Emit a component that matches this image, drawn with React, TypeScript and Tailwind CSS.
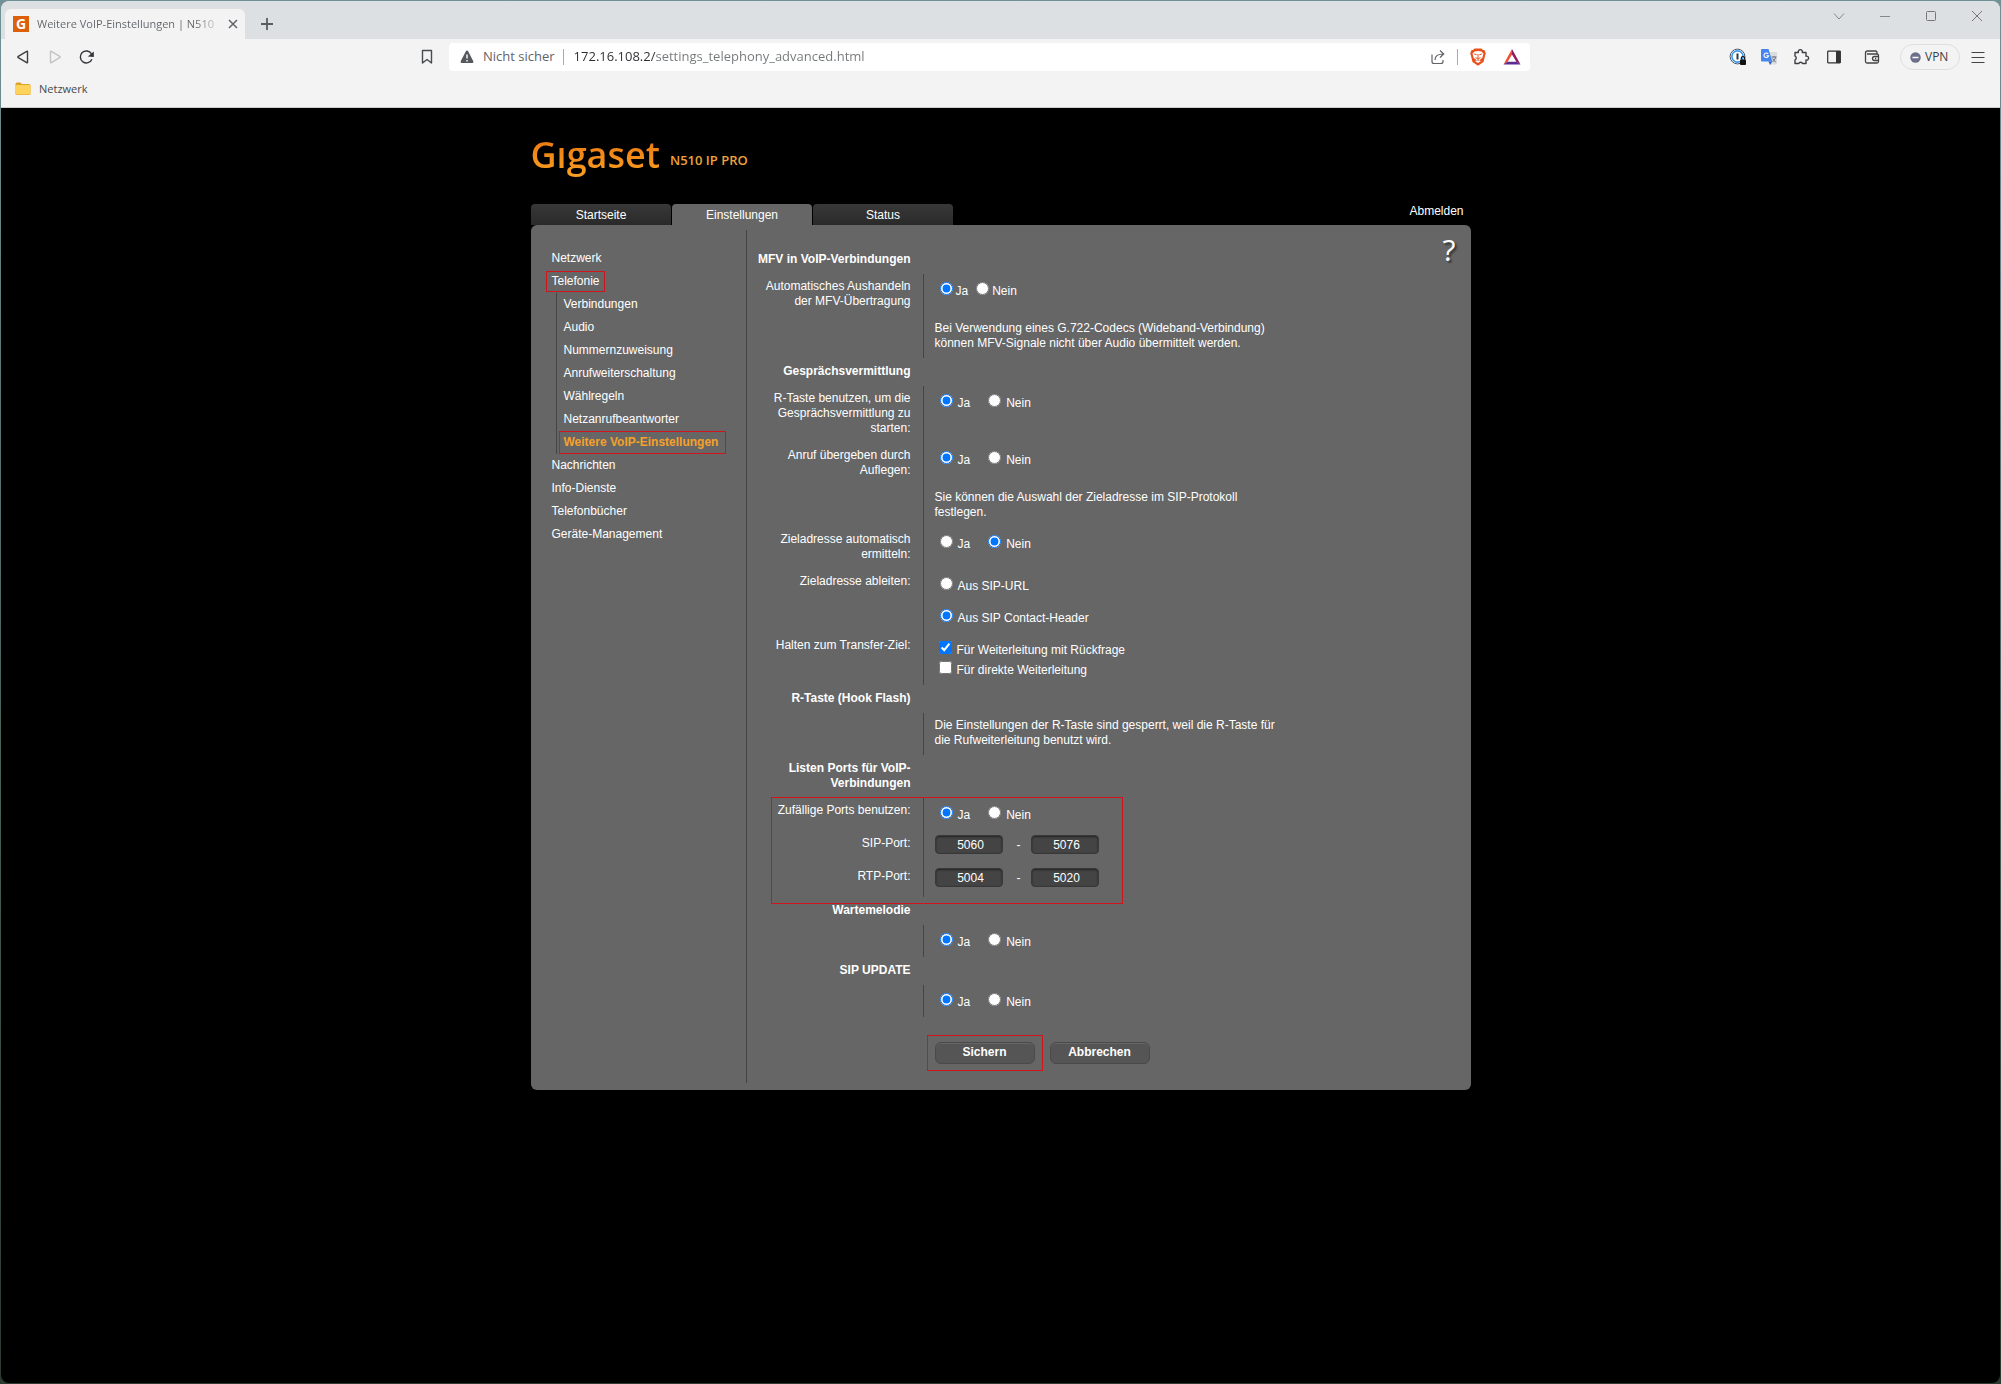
import type { ReactNode } from 'react';

const NAV_BEFORE = ['Netzwerk', 'Telefonie'];
const NAV_TELEPHONY = [
  'Verbindungen',
  'Audio',
  'Nummernzuweisung',
  'Anrufweiterschaltung',
  'Wählregeln',
  'Netzanrufbeantworter',
  'Weitere VoIP-Einstellungen',
];
const NAV_AFTER = [
  'Nachrichten',
  'Info-Dienste',
  'Telefonbücher',
  'Geräte-Management',
];

const TABS = ['Startseite', 'Einstellungen', 'Status'];

type FieldRowProps = {
  children: ReactNode;
  className?: string;
  label?: string;
};

function FieldRow({ children, className = '', label }: FieldRowProps) {
  return (
    <div className={`flex ${className}`}>
      <div className="mr-3 w-40 shrink-0 pt-[5px] pb-[7px] text-right">
        {label}
      </div>
      <div className="flex-1 border-l border-[#444] pl-[11px]">{children}</div>
    </div>
  );
}

function SectionTitle({ children }: { children: ReactNode }) {
  return (
    <h2 className="w-40 pt-[6px] pb-[7px] text-right font-bold">{children}</h2>
  );
}

function Note({ children }: { children: ReactNode }) {
  return <p className="max-w-[350px] pt-[5px] pb-[7px]">{children}</p>;
}

type RadioOptionProps = {
  checked?: boolean;
  label: string;
  name: string;
  tight?: boolean;
};

function RadioOption({ checked, label, name, tight }: RadioOptionProps) {
  return (
    <label
      className={`flex h-8 items-center ${tight ? 'gap-[3px]' : 'gap-[5px]'}`}
    >
      <input
        className="mb-1 size-[13px]"
        defaultChecked={checked}
        name={name}
        type="radio"
      />
      <span className="pt-[2px]">{label}</span>
    </label>
  );
}

type YesNoProps = {
  name: string;
  no?: boolean;
  tight?: boolean;
};

function YesNo({ name, no = false, tight = false }: YesNoProps) {
  return (
    <div className={`flex pl-[5px] ${tight ? 'gap-2' : 'gap-[18px]'}`}>
      <RadioOption checked={!no} label="Ja" name={name} tight={tight} />
      <RadioOption checked={no} label="Nein" name={name} tight={tight} />
    </div>
  );
}

type CheckOptionProps = {
  checked?: boolean;
  label: string;
};

function CheckOption({ checked, label }: CheckOptionProps) {
  return (
    <label className="flex h-5 items-center gap-[5px] pl-1">
      <input
        className="mb-1 size-[13px]"
        defaultChecked={checked}
        type="checkbox"
      />
      <span className="pt-[2px]">{label}</span>
    </label>
  );
}

function PortInput({ label, value }: { label: string; value: string }) {
  return (
    <input
      aria-label={label}
      className="h-[19px] w-[68px] rounded border border-[#383838] bg-[#444] pl-1 text-center shadow-[inset_0_1px_2px_#222]"
      defaultValue={value}
      type="text"
    />
  );
}

type PortRangeProps = {
  from: string;
  name: string;
  to: string;
};

function PortRange({ from, name, to }: PortRangeProps) {
  return (
    <div className="flex pt-1 pb-[10px]">
      <PortInput label={`${name} von`} value={from} />
      <span className="w-7 pt-[3px] pl-1 text-center">-</span>
      <PortInput label={`${name} bis`} value={to} />
    </div>
  );
}

function FormButton({ children }: { children: ReactNode }) {
  return (
    <button
      className="h-[22px] w-[100px] rounded-md border border-[#4a4a4a] bg-[#555] pb-px font-bold shadow-[inset_0_1px_0_#666]"
      type="button"
    >
      {children}
    </button>
  );
}

function NavLink({ label }: { label: string }) {
  const isActive = label === 'Weitere VoIP-Einstellungen';
  const isMarked = isActive || label === 'Telefonie';

  return (
    <li className="flex h-[23px] items-center">
      <a
        className={`relative ${isActive ? 'font-bold text-[#f5a12b]' : ''}`}
        href="#"
      >
        {label}
        {isMarked && (
          <span
            className={`absolute border border-[#d0161c] ${
              isActive
                ? '-top-1 -right-2 -bottom-1 -left-[5px]'
                : '-top-[3px] -right-[5px] -bottom-[3px] -left-[6px]'
            }`}
          />
        )}
      </a>
    </li>
  );
}

function TabStrip() {
  return (
    <div className="flex h-[38px] items-end rounded-t-lg bg-[#dce0e3] pl-1">
      <div className="flex h-[30px] w-60 items-center rounded-t-md bg-[#f3f3f3] pr-[3px] pl-2">
        <span className="flex size-4 items-center justify-center bg-[#dc5f0a] font-['Open_Sans'] text-sm font-bold text-white">
          G
        </span>
        <span className="ml-2 w-[186px] bg-linear-to-r from-[#5f6368] from-85% to-transparent bg-clip-text text-[11px] font-medium whitespace-nowrap text-transparent">
          Weitere VoIP-Einstellungen | N510
        </span>
        <button aria-label="Tab schließen" className="ml-auto" type="button">
          <svg className="size-[18px]" viewBox="0 0 18 18" fill="none" stroke="#5f6368" strokeWidth="1.5">
            <path d="M5 5l8 8M13 5l-8 8" />
          </svg>
        </button>
      </div>
      <button aria-label="Neuer Tab" className="mb-[6px] ml-[13px]" type="button">
        <svg className="size-[18px]" viewBox="0 0 18 18" fill="none" stroke="#5a5d60" strokeWidth="1.8">
          <path d="M9 3v12M3 9h12" />
        </svg>
      </button>
      <div className="mb-[15px] ml-auto flex gap-[30px] pr-[15px]">
        <button aria-label="Tabs suchen" type="button">
          <svg className="size-4" viewBox="0 0 16 16" fill="none" stroke="#888" strokeWidth="1">
            <path d="M3 5.500l5 5.500 5-5.500" />
          </svg>
        </button>
        <button aria-label="Minimieren" type="button">
          <svg className="size-4" viewBox="0 0 16 16" fill="none" stroke="#888" strokeWidth="1">
            <path d="M3 8.500h10" />
          </svg>
        </button>
        <button aria-label="Maximieren" type="button">
          <svg className="size-4" viewBox="0 0 16 16" fill="none" stroke="#777" strokeWidth="1">
            <rect x="3.500" y="3.500" width="9" height="9" rx="1" />
          </svg>
        </button>
        <button aria-label="Schließen" type="button">
          <svg className="size-4" viewBox="0 0 16 16" fill="none" stroke="#777" strokeWidth="1">
            <path d="M3 3l10 10M13 3L3 13" />
          </svg>
        </button>
      </div>
    </div>
  );
}

function NavigationIcons() {
  return (
    <div className="flex w-[435px] items-center">
      <button aria-label="Zurück" className="ml-[13px]" type="button">
        <svg className="size-[18px]" viewBox="0 0 18 18" fill="none" stroke="#3d3f42" strokeWidth="1.400" strokeLinejoin="round">
          <path d="M13.500 3.700v10.600q0 .9-.8.400L4.300 9.700q-.9-.7 0-1.400l8.400-5q.8-.4.8.400z" />
        </svg>
      </button>
      <button aria-label="Vorwärts" className="ml-[14px]" type="button">
        <svg className="size-[18px]" viewBox="0 0 18 18" fill="none" stroke="#c4c4c4" strokeWidth="1.400" strokeLinejoin="round">
          <path d="M4.500 3.700v10.600q0 .9.800.4l8.400-5q.9-.7 0-1.400l-8.400-5q-.8-.4-.8.400z" />
        </svg>
      </button>
      <button aria-label="Neu laden" className="ml-[14px]" type="button">
        <svg className="size-[18px]" viewBox="0 0 18 18" fill="none" stroke="#333538" strokeWidth="1.400">
          <path d="M13.900 11.200A6 6 0 1 1 13.500 5.900" />
          <path d="M11.500 8l3.600-3v3.300z" fill="#333538" />
        </svg>
      </button>
      <button aria-label="Lesezeichen" className="ml-auto" type="button">
        <svg className="size-[18px]" viewBox="0 0 18 18" fill="none" stroke="#4a4d50" strokeWidth="1.400" strokeLinejoin="round">
          <path d="M4.500 2.500h9v12.500L9 11.500l-4.500 3.500z" />
        </svg>
      </button>
    </div>
  );
}

function AddressBar() {
  return (
    <div className="flex h-7 w-[1081px] items-center rounded bg-white pr-[9px] text-[13px] text-[#5f6368]">
      <svg className="ml-[10px] size-4" viewBox="0 0 16 16">
        <path d="M8 1.500q.7 0 1 .6l5.300 10.200q.6 1.500-.9 1.700H2.600q-1.500-.2-.9-1.700L7 2.100q.3-.6 1-.6z" fill="#55585c" />
        <path d="M8 5.500v4M8 11v1.500" stroke="#fff" strokeWidth="1.400" />
      </svg>
      <span className="ml-2">Nicht sicher</span>
      <span className="mr-[10px] ml-2 h-4 w-px bg-[#aaa]" />
      {/* host part is darker than the path */}
      <input
        aria-label="Adresse"
        className="w-[420px] bg-linear-to-r from-[#2b2d30] from-[82px] to-[#747779] to-[82px] bg-clip-text text-transparent"
        defaultValue="172.16.108.2/settings_telephony_advanced.html"
        type="text"
      />
      <div className="ml-auto flex items-center">
        <svg className="size-[18px]" viewBox="0 0 18 18" fill="none" stroke="#5f6368" strokeWidth="1.200">
          <path d="M3 6.500V13.500q0 2 2 2h7q2 0 2-2V12" />
          <path d="M6 12q0-6 8.500-6M11 2.500l3.700 3.500-3.700 3.500" />
        </svg>
        <span className="ml-[10px] h-4 w-px bg-[#aaa]" />
        <svg className="ml-[11px] size-[18px]" viewBox="0 0 18 18">
          <path d="M5.500.5h7l1.500 1.600h1.400L16.800 5.200l-.6 2-1.700 6.800L9 17.800 3.500 14 1.800 7.200 1.200 5.200l1.400-3.100H4z" fill="#e8501c" />
          <path d="M5.500 3.600L9 3l3.500.6 2 2.200-1.300 4.200-2.500 1.700 1 1.500L9 15l-2.700-1.800 1-1.500L4.800 10 3.500 5.800z" fill="#fff" />
          <path d="M5.200 6l2.500.8M12.800 6l-2.500.8M9 6v4M6.500 9.500L9 11l2.500-1.500M7.600 12.500L9 11.800l1.400.7" fill="none" stroke="#e8501c" strokeWidth="1" />
        </svg>
        <svg className="ml-4 size-[18px]" viewBox="0 0 18 18">
          <path d="M9 1v5.500L4.500 14 .5 16.500z" fill="#f0502d" />
          <path d="M9 1l8.500 15.500-4-2.500L9 6.500z" fill="#8e1c63" />
          <path d="M.5 16.500h17l-4-2.800h-9z" fill="#5a2d91" />
        </svg>
      </div>
    </div>
  );
}

function ExtensionIcons() {
  return (
    <div className="ml-auto flex items-center pr-[13px]">
      <svg className="size-[18px]" viewBox="0 0 18 18">
        <circle cx="8.500" cy="8.500" r="7.400" fill="#fff" stroke="#44566b" strokeWidth="1" />
        <circle cx="8.500" cy="8.500" r="5.600" fill="none" stroke="#3c97e8" strokeWidth="1.600" />
        <path d="M8.500 5.500v6" stroke="#26384c" strokeWidth="2" />
        <rect x="11" y="11.500" width="6" height="5.500" rx="1" fill="#111" />
        <path d="M12.300 11.500V10.200a1.700 1.700 0 0 1 3.400 0v1.300" fill="none" stroke="#111" strokeWidth="1.200" />
      </svg>
      <svg className="ml-[13px] size-[18px]" viewBox="0 0 18 18">
        <path d="M7 4h9q1 0 1 1v10.500q0 1-1 1h-6z" fill="#dadce0" />
        <path d="M2 1h6.500l3.800 12.500H2q-1 0-1-1V2q0-1 1-1z" fill="#4684ee" />
        <path d="M8.500 13.500h3.800L10 17z" fill="#2b62c9" />
        <path d="M8.200 5.900a2.300 2.300 0 1 0 .4 1.800H6.400" fill="none" stroke="#fff" strokeWidth="1.100" />
        <path d="M11.500 9h5M14 8v1M15.800 9q-.8 3-3.300 5M12.600 10.500q1 2 3.200 3.500" fill="none" stroke="#687078" strokeWidth="1" />
      </svg>
      <svg className="ml-[14px] size-[18px]" viewBox="0 0 18 18" fill="none" stroke="#3d3f42" strokeWidth="1.400" strokeLinejoin="round">
        <path d="M3 4.500h3.400a2.100 2.100 0 1 1 3.900 0h3.700v3.700a2 2 0 1 1 0 3.800v3.500h-3.500a2 2 0 0 0-3.700 0H3v-3.700a2 2 0 0 0 0-3.700z" />
      </svg>
      <svg className="ml-[15px] size-[18px]" viewBox="0 0 18 18">
        <rect x="2.700" y="3.200" width="12.600" height="11.600" rx=".5" fill="none" stroke="#333" strokeWidth="1.200" />
        <path d="M11 3h4.500v12H11z" fill="#333" />
      </svg>
      <svg className="ml-5 size-[18px]" viewBox="0 0 18 18" fill="none" stroke="#444" strokeWidth="1.300">
        <path d="M14 6V4.500q0-1.500-1.500-1.500h-8Q2.500 3 2.500 5v8.500Q2.500 15 4 15h10q1.500 0 1.500-1.500v-6Q15.500 6 14 6H4" />
        <path d="M15.500 8.500h-4q-2 0-2 2t2 2h4M12 10.500h1.200" />
      </svg>
      <button
        className="ml-[19px] flex h-[26px] w-[60px] items-center gap-1 rounded-full border border-[#dedede] pl-[9px] text-xs text-[#3d3f42]"
        type="button"
      >
        <svg className="size-[11px]" viewBox="0 0 11 11">
          <circle cx="5.500" cy="5.500" r="5.200" fill="#6b6f8a" />
          <path d="M2.500 5.500h6" stroke="#fff" strokeWidth="1.500" />
        </svg>
        VPN
      </button>
      <button aria-label="Menü" className="ml-[9px]" type="button">
        <svg className="size-[18px]" viewBox="0 0 18 18" stroke="#444" strokeWidth="1.200">
          <path d="M2.500 4.500h13M2.500 9.500h13M2.500 14.500h13" />
        </svg>
      </button>
    </div>
  );
}

function BrowserChrome() {
  return (
    <header className="rounded-t-lg border-b border-[#c9cccd] bg-[#f3f3f3] font-['Open_Sans',sans-serif]">
      <TabStrip />
      <div className="flex h-9 items-center gap-[13px]">
        <NavigationIcons />
        <AddressBar />
        <ExtensionIcons />
      </div>
      <a
        className="flex h-8 items-start gap-2 pt-[5px] pl-[14px] text-[11px] leading-[18px] text-[#46494d]"
        href="#"
      >
        <svg className="mt-px size-4" viewBox="0 0 16 16">
          <path d="M.5 3q0-1.500 1.500-1.500h3.500l1.500 1.500H14q1.500 0 1.500 1.500v8.500q0 1-1.500 1H2q-1.500 0-1.500-1z" fill="#dfa32c" />
          <path d="M.5 5q0-1 1-1h13q1 0 1 1v7.500q0 1-1.500 1H2q-1.500 0-1.500-1z" fill="#fdd35b" />
        </svg>
        Netzwerk
      </a>
    </header>
  );
}

function SideNav() {
  return (
    <nav className="mt-[5px] mb-[7px] w-[216px] shrink-0 border-r border-[#444] pt-[17px] pl-[21px]">
      <ul>
        {NAV_BEFORE.map((label) => (
          <NavLink key={label} label={label} />
        ))}
      </ul>
      <ul className="ml-1 border-l border-[#444] pl-[7px]">
        {NAV_TELEPHONY.map((label) => (
          <NavLink key={label} label={label} />
        ))}
      </ul>
      <ul>
        {NAV_AFTER.map((label) => (
          <NavLink key={label} label={label} />
        ))}
      </ul>
    </nav>
  );
}

function SettingsForm() {
  return (
    <form className="flex-1 pt-[21px] pb-[26px] pl-1">
      <SectionTitle>MFV in VoIP-Verbindungen</SectionTitle>
      <FieldRow label="Automatisches Aushandeln der MFV-Übertragung">
        <YesNo name="mfv" tight />
        <div className="pt-[10px]">
          <Note>
            Bei Verwendung eines G.722-Codecs (Wideband-Verbindung) können
            MFV-Signale nicht über Audio übermittelt werden.
          </Note>
        </div>
      </FieldRow>

      <SectionTitle>Gesprächsvermittlung</SectionTitle>
      <FieldRow label="R-Taste benutzen, um die Gesprächsvermittlung zu starten:">
        <YesNo name="r-key" />
      </FieldRow>
      <FieldRow label="Anruf übergeben durch Auflegen:">
        <YesNo name="on-hook" />
        <div className="pt-[10px]">
          <Note>
            Sie können die Auswahl der Zieladresse im SIP-Protokoll festlegen.
          </Note>
        </div>
      </FieldRow>
      <FieldRow label="Zieladresse automatisch ermitteln:">
        <YesNo name="auto-target" no />
      </FieldRow>
      <FieldRow label="Zieladresse ableiten:">
        <div className="pl-[5px]">
          <RadioOption label="Aus SIP-URL" name="derive" />
          <RadioOption checked label="Aus SIP Contact-Header" name="derive" />
        </div>
      </FieldRow>
      <FieldRow label="Halten zum Transfer-Ziel:">
        <div className="py-[6px]">
          <CheckOption checked label="Für Weiterleitung mit Rückfrage" />
          <CheckOption label="Für direkte Weiterleitung" />
        </div>
      </FieldRow>

      <SectionTitle>R-Taste (Hook Flash)</SectionTitle>
      <FieldRow>
        <Note>
          Die Einstellungen der R-Taste sind gesperrt, weil die R-Taste für die
          Rufweiterleitung benutzt wird.
        </Note>
      </FieldRow>

      <SectionTitle>Listen Ports für VoIP-Verbindungen</SectionTitle>
      <div className="relative">
        <FieldRow className="h-[33px]" label="Zufällige Ports benutzen:">
          <YesNo name="random-ports" />
        </FieldRow>
        <FieldRow label="SIP-Port:">
          <PortRange from="5060" name="SIP-Port" to="5076" />
        </FieldRow>
        <FieldRow label="RTP-Port:">
          <PortRange from="5004" name="RTP-Port" to="5020" />
        </FieldRow>
        <div className="pointer-events-none absolute -top-px -bottom-[7px] left-5 w-[352px] border border-[#d0161c]" />
      </div>

      <SectionTitle>Wartemelodie</SectionTitle>
      <FieldRow className="h-8">
        <YesNo name="hold-music" />
      </FieldRow>

      <SectionTitle>SIP UPDATE</SectionTitle>
      <FieldRow className="h-8">
        <YesNo name="sip-update" />
      </FieldRow>

      <div className="mt-[25px] flex gap-[15px] pl-[184px]">
        <div className="relative flex">
          <FormButton>Sichern</FormButton>
          <div className="pointer-events-none absolute -inset-x-2 -inset-y-[7px] border border-[#d0161c]" />
        </div>
        <FormButton>Abbrechen</FormButton>
      </div>
    </form>
  );
}

export default function App() {
  return (
    <div className="flex min-h-screen flex-col bg-linear-to-b from-[#6f9296] to-[#2c3a30] p-px">
      <div className="flex-1 rounded-lg bg-black">
        <BrowserChrome />
        <main className="mx-auto w-[940px] pt-6 font-['Liberation_Sans',Arial,sans-serif] text-xs leading-[15px] text-white">
          <div className="flex h-[72px] items-start">
            <span className="bg-linear-to-b from-[#e8700c] to-[#fba224] bg-clip-text font-['Open_Sans'] text-4xl leading-[46px] font-semibold text-transparent">
              Gıgaset
            </span>
            <span className="ml-[10px] pt-[18px] font-['Open_Sans'] text-[13px] leading-5 font-semibold text-[#eda33c]">
              N510 IP PRO
            </span>
          </div>
          <div className="flex h-[21px] gap-px">
            {TABS.map((tab) => (
              <a
                className={`flex w-[140px] items-center justify-center rounded-t pt-[2px] pl-px ${
                  tab === 'Einstellungen'
                    ? 'bg-[#666]'
                    : 'bg-linear-to-b from-[#383838] to-[#2a2a2a]'
                }`}
                href="#"
                key={tab}
              >
                {tab}
              </a>
            ))}
            <a className="mr-[7px] ml-auto self-start" href="#">
              Abmelden
            </a>
          </div>
          <div className="flex rounded-md bg-[#666]">
            <SideNav />
            <SettingsForm />
            <button
              aria-label="Hilfe"
              className="self-start pt-[9px] pr-[15px] font-['Open_Sans'] text-3xl leading-8 [text-shadow:2px_2px_2px_#333]"
              type="button"
            >
              ?
            </button>
          </div>
        </main>
      </div>
    </div>
  );
}
